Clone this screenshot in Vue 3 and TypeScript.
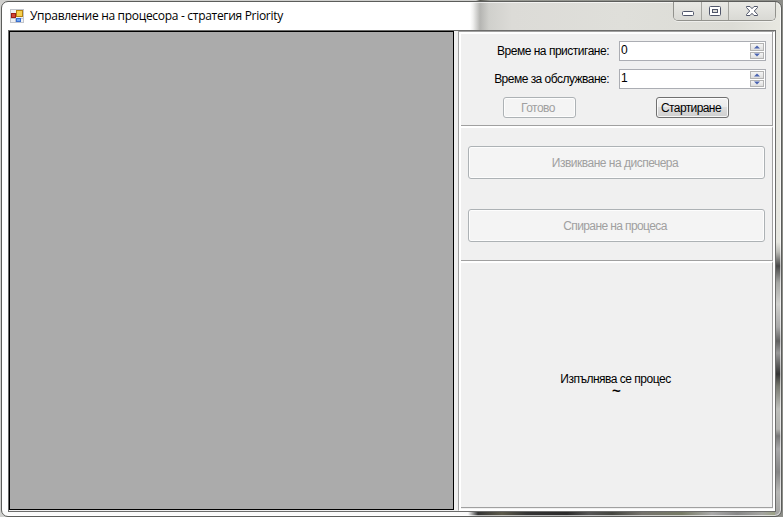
<script setup lang="ts">
import { ref } from 'vue'

const fields = ref([
  { label: 'Време на пристигане:', value: 0, cls: 'arrival' },
  { label: 'Време за обслужване:', value: 1, cls: 'service' },
])
</script>

<template>
  <div class="desktop">
    <div class="window">
      <header class="titlebar">
        <svg class="app-icon" width="14" height="14" viewBox="0 0 14 14">
          <rect x="0.5" y="0.5" width="13" height="13" fill="#eef0f4" stroke="#c2c5cc" />
          <path d="M5.5 9V13M0 9.5H13" stroke="#c2c5cc" />
          <rect x="1.5" y="4.5" width="4" height="4" fill="#d24437" stroke="#9c1d16" />
          <rect x="6.5" y="1.5" width="6" height="6" fill="#f7cf4c" stroke="#b58212" />
          <rect x="6.5" y="9.5" width="4" height="3" fill="#72a9f2" stroke="#3a6fd0" />
        </svg>
        <h1 class="title">Управление на процесора - стратегия Priority</h1>
        <div class="controls">
          <button class="ctl min" aria-label="Minimize">
            <svg width="14" height="12" viewBox="0 0 14 12"><rect x="1.5" y="6.5" width="11" height="4" rx="1" fill="#fff" stroke="#50566a" /></svg>
          </button>
          <button class="ctl max" aria-label="Maximize">
            <svg width="14" height="12" viewBox="0 0 14 12">
              <rect x="1.5" y="1.5" width="11" height="9" rx="1" fill="#fff" stroke="#50566a" />
              <rect x="4.5" y="4.5" width="5" height="3" fill="#dcdcd8" stroke="#50566a" />
            </svg>
          </button>
          <button class="ctl close" aria-label="Close">
            <svg width="14" height="12" viewBox="0 0 14 12"><path d="M1.5 1.5H5L7 3.7L9 1.5H12.5V2.5L9.3 6L12.5 9.5V10.5H9L7 8.3L5 10.5H1.5V9.5L4.7 6L1.5 2.5Z" fill="#fff" stroke="#50566a" /></svg>
          </button>
        </div>
      </header>

      <main class="client">
        <div class="grid"></div>
        <aside class="side">
          <section class="inputs">
            <div v-for="f in fields" :key="f.cls" class="row">
              <label class="label"><span :class="f.cls">{{ f.label }}</span></label>
              <div class="spin">
                <span class="num">{{ f.value }}</span>
                <span class="steps">
                  <i><svg width="6" height="4" viewBox="0 0 6 4"><path d="M0 3.5L3 0.5L6 3.5Z" fill="#4a63b0" /></svg></i>
                  <i><svg width="6" height="4" viewBox="0 0 6 4"><path d="M0 0.5L3 3.5L6 0.5Z" fill="#4a63b0" /></svg></i>
                </span>
              </div>
            </div>
            <div class="buttons">
              <button class="btn small" disabled><span class="t-ready">Готово</span></button>
              <button class="btn small"><span class="t-start">Стартиране</span></button>
            </div>
          </section>
          <section class="actions">
            <button class="btn wide" disabled><span class="t-call">Извикване на диспечера</span></button>
            <button class="btn wide" disabled><span class="t-stop">Спиране на процеса</span></button>
          </section>
          <section class="status">
            <p class="running">Изпълнява се процес</p>
            <p class="current">~</p>
          </section>
        </aside>
      </main>
    </div>
  </div>
</template>

<style>
body { margin: 0; overflow: hidden; }
</style>

<style scoped>
* { box-sizing: border-box; }
.desktop {
  width: 783px; height: 517px; padding: 1px 0 0 1px;
  background: linear-gradient(90deg, #d0d0ce 0 476px, #55564f 480px, #9a9b95 490px, #8c8d88);
}
.window {
  width: 781px; height: 516px; padding: 0 5px 0 6px;
  display: flex; flex-direction: column;
  border: 1px solid #5c5d5b; border-radius: 7px;
  background:
    linear-gradient(180deg, transparent 0 240px, #bcbcb7 250px, #474747 264px, #a7a8a5 281px, #d1d1ce 302px, #aaa 325px, #606060 339px, #999 351px, #333 372px, #77786f 384px, #bebfbb 407px, #b3b3b0 427px, #777 434px, #a9a9aa 447px, #858585 470px, #b7b7b5 490px, #a2a2a0 515px) right 0 top 0 / 6px 100% no-repeat,
    linear-gradient(90deg, #fafafa 0 466px, #333 476px, #5c5a4b 500px, #343434 525px, #2a2a2a 565px, #555 587px, #44453f 610px, #75736d 640px, #777b66 680px, #aaa 710px, #888 735px, #a5a5a2 760px, #9aa181 775px) left 0 bottom 0 / 100% 5px no-repeat,
    linear-gradient(90deg, #fff 0 468px, #f0f0ef 471px, #b5b5b2 478px, #d0d0cc 487px, #dcdbd7 510px, #dfdfda 620px, #dcdcd6 730px, #e8e8e1 781px);
  box-shadow: inset 0 0 0 1px rgba(255, 255, 255, .65);
}
.titlebar { height: 28px; flex: none; display: flex; align-items: flex-start; }
.app-icon { margin: 7px 0 0 2px; flex: none; }
.title {
  margin: 6px 0 0 6px; font: 400 12px/16px "Open Sans", "Noto Sans", sans-serif;
  letter-spacing: -0.3px; color: #000; white-space: nowrap;
}
.controls {
  margin: 0 0 0 auto; width: 103px; height: 19px; display: flex;
  border: 1px solid #92928d; border-top: 0; border-radius: 0 0 5px 5px;
  box-shadow: inset 0 0 0 1px rgba(255, 255, 255, .4), 0 1px 0 rgba(255, 255, 255, .5);
}
.ctl {
  display: flex; justify-content: center; padding: 3px 0 0; border: 0;
  border-right: 1px solid #a3a39e; background: linear-gradient(#e9e9e5, #d9d9d4);
}
.min { width: 28px; border-radius: 0 0 0 4px; }
.max { width: 27px; }
.close { flex: 1; border-right: 0; border-radius: 0 0 4px 0; }
.client {
  width: 768px; height: 482px; display: grid; grid-template-columns: 445px 1fr; column-gap: 4px;
  border: 1px solid #6c6c6b; background: #f0f0f0;
  font: 12px/14px "Liberation Sans", Arial, sans-serif; color: #000;
}
.grid { border: 1px solid #000; background: #ababab; margin-bottom: 1px; }
.side {
  display: flex; flex-direction: column; border: 1px solid #a0a0a0;
  border-right-color: #fff; border-bottom-color: #fff;
  box-shadow: inset 1px 1px 0 1px #fff, inset -1px -1px 0 #fff;
}
.side section {
  margin-left: 2px; margin-right: 1px; border-right: 1px solid #a0a0a0;
  border-bottom: 1px solid #a0a0a0;
}
.inputs { height: 94px; padding: 9px 6px 0 0; }
.row { height: 20px; margin-bottom: 8px; display: flex; justify-content: flex-end; align-items: center; gap: 10px; }
.label { white-space: nowrap; }
.arrival { letter-spacing: -0.49px; }
.service { letter-spacing: -0.52px; }
.spin {
  width: 147px; height: 20px; padding: 1px; display: flex; justify-content: space-between;
  border: 1px solid #abadb3; background: #fff;
}
.num { line-height: 15px; }
.steps { width: 14px; display: flex; flex-direction: column; gap: 1px; }
.steps i {
  flex: 1; display: flex; align-items: center; justify-content: center;
  border: 1px solid #b3b3b3; background: linear-gradient(#f5f5f5, #dedede);
}
.buttons { display: flex; justify-content: space-between; padding: 0 37px 0 42px; }
.btn {
  display: flex; align-items: center; justify-content: center; padding: 0 3px 0 0; border-radius: 3px;
  border: 1px solid #707070; font: inherit; color: #000; white-space: nowrap;
  background: linear-gradient(#f3f3f3, #ebebeb 49%, #dddddd 50%, #cfcfcf);
  box-shadow: inset 0 0 0 1px rgba(255, 255, 255, .8);
}
.btn:disabled { border-color: #adb2b5; background: #f4f4f4; color: #a0a0a0; }
.t-ready { letter-spacing: -0.5px; }
.t-start { letter-spacing: -0.6px; }
.t-call { letter-spacing: -0.5px; }
.t-stop { letter-spacing: -0.6px; }
.small { width: 73px; height: 21px; }
.actions { height: 135px; padding: 18px 7px 0; display: flex; flex-direction: column; gap: 30px; border-top: 2px solid #fff; }
.wide { width: 297px; height: 33px; }
.status { flex: 1; margin-bottom: 2px; padding-top: 110px; border-top: 2px solid #fff; text-align: center; }
.status p { margin: 0; }
.running { line-height: 12px; letter-spacing: -0.5px; padding-right: 2px; }
.current { font-size: 15px; line-height: 12px; font-weight: 700; }
</style>
